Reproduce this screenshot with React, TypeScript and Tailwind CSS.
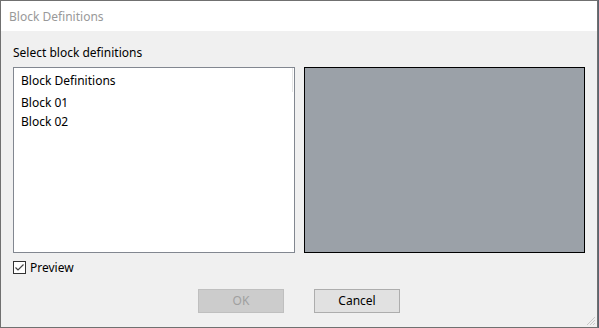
const font = { fontFamily: '"Segoe UI", "Noto Sans", "Liberation Sans", sans-serif' };

export default function App() {
  return (
    <div className="w-[599px] h-[328px] bg-[#5a6470] text-[12px] text-black" style={font}>
      <div className="w-[598px] h-[328px] border border-[#707070] flex flex-col bg-[#f0f0f0]">
        {/* Title bar */}
        <div className="h-[30px] bg-white flex items-center pl-[8px] pt-[1px] text-[12px] text-[#999999]">
          Block Definitions
        </div>

        {/* Body */}
        <div className="relative flex-1 flex flex-col px-[12px]">
          <div className="mt-[14px] h-[16px] leading-[16px]">Select block definitions</div>

          <div className="mt-[6px] flex gap-[9px]">
            {/* List view */}
            <div className="w-[282px] h-[186px] bg-white border border-[#828790] flex flex-col">
              <div className="relative h-[24px] flex items-center pl-[7px] pt-[2px]">
                Block Definitions
                <span className="absolute right-[1px] top-[0px] h-[24px] w-px bg-[#e5e5e5]" />
              </div>
              <div className="h-[19px] flex items-center pl-[7px] pt-[2px]">Block 01</div>
              <div className="h-[19px] flex items-center pl-[7px] pt-[2px]">Block 02</div>
            </div>

            {/* Preview */}
            <div className="w-[282px] h-[186px] bg-[#9ba1a8] border border-black" />
          </div>

          <label className="mt-[8px] flex items-center gap-[4px] h-[13px]">
            <span className="w-[13px] h-[13px] bg-white border border-[#333333] flex items-center justify-center">
              <svg width="11" height="11" viewBox="0 0 11 11" fill="none">
                <path d="M1.5 5.5l2.5 2.5 5.5-5.5" stroke="#444444" strokeWidth="1.2" />
              </svg>
            </span>
            <span className="leading-[16px]">Preview</span>
          </label>

          <div className="mt-[15px] flex justify-center gap-[30px]">
            <button
              disabled
              className="w-[86px] h-[24px] bg-[#cccccc] border border-[#bfbfbf] text-[#a0a0a0] text-[12px]"
              style={font}
            >
              OK
            </button>
            <button
              className="w-[86px] h-[24px] bg-[#e1e1e1] border border-[#adadad] text-black text-[12px]"
              style={font}
            >
              Cancel
            </button>
          </div>

          {/* Size grip */}
          <svg className="absolute right-[1px] bottom-[1px]" width="12" height="12" viewBox="0 0 12 12">
            <path d="M11 3L3 11M11 6L6 11M11 9L9 11" stroke="#c8c8c8" strokeWidth="1" />
          </svg>
        </div>
      </div>
    </div>
  );
}
